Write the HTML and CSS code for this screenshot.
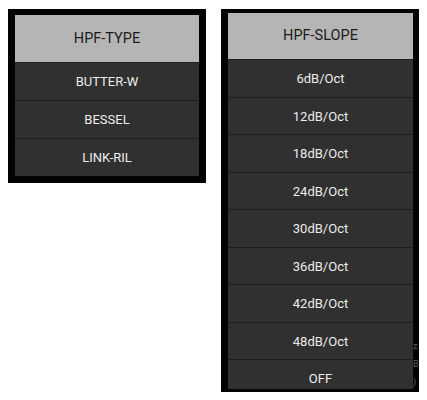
FILE: index.html
```html
<!DOCTYPE html>
<html lang="en">
<head>
    <meta charset="UTF-8">
    <meta name="viewport" content="width=device-width, initial-scale=1.0">
    <title>HPF Menus</title>
    <link rel="stylesheet" href="styles.css">
</head>
<body>

<div class="screen">
    <div class="popup popup-type">
        <div class="menu">
            <div class="menu-title">HPF-TYPE</div>
            <div class="menu-item">BUTTER-W</div>
            <div class="menu-item">BESSEL</div>
            <div class="menu-item">LINK-RIL</div>
        </div>
    </div>

    <div class="popup popup-slope">
        <div class="menu">
            <div class="menu-title">HPF-SLOPE</div>
            <div class="menu-item">6dB/Oct</div>
            <div class="menu-item">12dB/Oct</div>
            <div class="menu-item">18dB/Oct</div>
            <div class="menu-item">24dB/Oct</div>
            <div class="menu-item">30dB/Oct</div>
            <div class="menu-item">36dB/Oct</div>
            <div class="menu-item">42dB/Oct</div>
            <div class="menu-item">48dB/Oct</div>
            <div class="menu-item">OFF</div>
        </div>
        <div class="edge-text">
            <span>z</span>
            <span>B</span>
            <span>)</span>
        </div>
    </div>
</div>

</body>
</html>
```

FILE: styles.css
```css
body {
    font-family: Roboto, "Liberation Sans", Arial, sans-serif;
    background-color: #fff;
    margin: 0;
    padding: 0;
}
.screen {
    display: flex;
    align-items: flex-start;
    padding: 9px 0 0 8px;
    gap: 15px;
}
.popup {
    background-color: #030303;
    width: 198px;
    box-sizing: border-box;
    position: relative;
    overflow: hidden;
}
.popup-type {
    height: 174px;
    padding: 6px 7px 7px 7px;
}
.popup-slope {
    height: 383px;
    padding: 4px 6px 3px 7px;
}
.menu {
    height: 100%;
    overflow: hidden;
    background-color: #2f2f2f;
}
.menu-title {
    background-color: #b5b5b5;
    color: #1c1c1c;
    font-size: 14.5px;
    height: 47px;
    line-height: 47px;
    text-align: center;
}
.popup-slope .menu-title {
    height: 46px;
    line-height: 46px;
}
.menu-item {
    background-color: #303030;
    color: #ececec;
    font-size: 13px;
    height: 38px;
    line-height: 37px;
    text-align: center;
    border-top: 1px solid #1e1e1e;
    box-sizing: border-box;
}
.popup-slope .menu-item {
    height: 37.5px;
}
.edge-text {
    position: absolute;
    right: 0;
    top: 332px;
    width: 6px;
    display: flex;
    flex-direction: column;
    gap: 7px;
    color: #5e5e5e;
    font-size: 9px;
    line-height: 11px;
}
.edge-text span {
    display: block;
}
```
